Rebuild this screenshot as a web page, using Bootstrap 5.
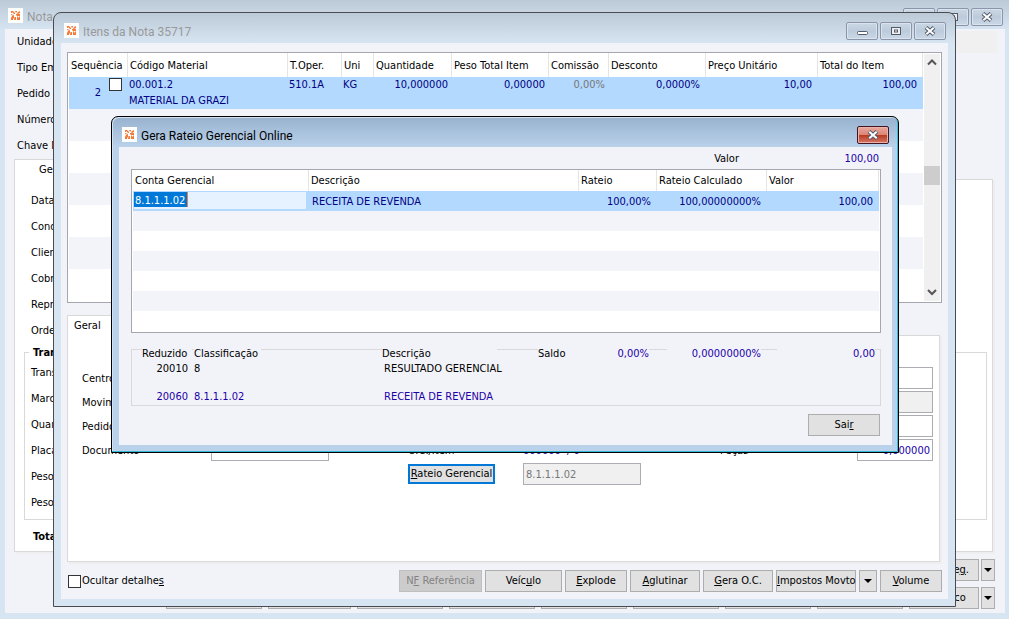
<!DOCTYPE html>
<html lang="pt-BR">
<head>
<meta charset="utf-8">
<meta name="viewport" content="width=device-width, initial-scale=1">
<title>Nota Fiscal</title>
<link href="https://cdn.jsdelivr.net/npm/bootstrap@5.3.0/dist/css/bootstrap.min.css" rel="stylesheet">
<style>
  :root { --client: #f2f3f9; --frame: #d7e4f2; --frame-top: #bccad8; --edge: #4a4a50; --line: #d9d9d9; --field: #abadb3; --navy: #000080; --blue: #1c00a8; }
  body { font: 11px/14px "DejaVu Sans Condensed", "Noto Sans", sans-serif; color: #000; background: #d7e4f2; min-height: 100vh; overflow: hidden; }
  label, input, button, th, td { font-size: 11px; line-height: 14px; }
  .win { position: absolute; isolation: isolate; display: flex; flex-direction: column; background: linear-gradient(var(--frame-top), var(--frame) 30px); overflow: hidden; }
  .win-client { background: var(--client); overflow: hidden; }
  .win-back { inset: 0; padding: 0 4px 6px 5px; }
  .win-items { inset: 12px 53px 12px 53px; padding: 0 7px 7px 7px; border: 1px solid var(--edge); border-radius: 8px 8px 0 0; }
  .win-items > .win-client { padding: 9px 6px 7px; }
  .win-modal { --frame: #b9d1ea; --frame-top: #98b2cf; inset: 116px 110px auto 111px; padding: 0 6px 7px 7px; border: 1px solid #000; border-radius: 7px 7px 0 0; box-shadow: inset -1px -1px #35b9d6, inset 1px 1px #d3e2f1; }
  .win-modal > .win-client { padding: 4px 11px 9px 12px; }
  .titlebar { height: 30px; font: 12px/16px Roboto, "Noto Sans", sans-serif; color: #999; }
  .win-back > .titlebar { height: 29px; padding: 4px 2px 0 3px; }
  .win-items > .titlebar { padding: 6px 2px 0 3px; }
  .win-modal > .titlebar { padding: 6px 3px 0 3px; color: #000; }
  .title-text { padding: 5px 0 0 4px; }
  .app-ico { width: 15px; height: 15px; flex: none; }
  .cap-btn { width: 32px; height: 18px; padding: 0; border: 1px solid #8995a9; border-radius: 2px; background: linear-gradient(#cbd7e4, #bccbdb 50%, #cbd8e6); box-shadow: inset 0 0 0 1px #dbe4ee; display: flex; align-items: center; justify-content: center; }
  .cap-close { border-color: #431422; background: linear-gradient(#e8a99d, #dc8576 48%, #b5391f 50%, #d8786a); box-shadow: inset 0 0 0 1px #eab3a8; }
  .frow { height: 26px; display: flex; align-items: center; }
  .frow label { width: 110px; flex: none; white-space: nowrap; }
  .frow input { width: 200px; height: 22px; }
  .tbox { border: 1px solid var(--field); border-radius: 0; background: #fff; height: 22px; width: 100%; padding: 1px 2px 0; min-width: 0; color: var(--blue); }
  .tbox:disabled { background: #f0f0f0; color: #777; }
  .tab-head { height: 21px; margin-bottom: -1px; background: #fff; border: 1px solid var(--line); border-bottom: 0; z-index: 1; padding: 3px 6px; flex: none; }
  .tab-body { background: #fff; border: 1px solid var(--line); box-shadow: 2px 2px #eeeef1; }
  .group { border: 1px solid var(--line); margin: 8px 5px 0 9px; padding: 7px 0 3px 6px; }
  .group-title { position: absolute; top: -7px; left: 4px; padding: 0 4px; background: #fff; font-weight: bold; }
  .pbtn { height: 22px; padding: 0; border: 1px solid #adadad; border-radius: 0; background: #e1e1e1; color: #000; white-space: nowrap; flex: none; line-height: 20px; }
  .pbtn:disabled { background: #ccc; border-color: #bfbfbf; color: #838383; }
  .pbtn-focus { border: 2px solid #0078d7; height: 20px; line-height: 16px; }
  .w96 { width: 96px; } .w86 { width: 86px; } .w83 { width: 83px; } .w80 { width: 80px; } .w77 { width: 77px; } .w72 { width: 72px; } .w70 { width: 70px; } .w62 { width: 62px; } .w18 { width: 18px; } .w14 { width: 14px; }
  .arrow { display: inline-block; border: 4px solid transparent; border-top-color: #000; border-bottom: 0; vertical-align: middle; }
  .grid-box { border: 1px solid #a5a6ae; background: #fff; overflow: hidden; }
  .items-box { height: 251px; flex: none; }
  .gtable { width: 100%; table-layout: fixed; border-collapse: separate; border-spacing: 0; }
  .gtable th { font-weight: normal; white-space: nowrap; padding: 1px 0 0 2px; border-right: 1px solid #e5e5e5; }
  .gtable td { padding: 0 6px 0 1px; color: var(--navy); white-space: nowrap; vertical-align: top; }
  .items th { height: 24px; }
  .items td { height: 32px; line-height: 16px; }
  .rateio th { height: 21px; }
  .rateio td { height: 20px; line-height: 20px; }
  .rateio .sel td { padding-top: 1px; line-height: 19px; }
  .gtable .sel td { background: #b3d9ff; }
  .gtable .alt td { background: #f3f4f9; }
  .scrollbar { width: 16px; background: #f0f0f0; flex: none; margin: 1px 1px 1px 0; }
  .thumb { height: 19px; background: #cdcdcd; margin-top: 94px; }
  .chk { appearance: none; width: 13px; height: 13px; border: 1px solid #333; background: #fff; margin: 0; flex: none; }
  .detail-grid { display: grid; grid-template-columns: 129px 118px 1fr 115px 118px 1fr 137px 76px; grid-auto-rows: 22px; row-gap: 2px; align-items: center; padding: 31px 6px 0 14px; }
  .detail-grid label, .detail-grid span { padding-top: 1px; }
  .editcell { margin: 0 3px 2px 0; height: 17px; background: #e6f2ff; display: flex; }
  .editcell input { width: 54px; height: 15px; padding: 2px 0 0 1px; border: 0; border-right: 1px solid #f08030; background: #0078d7; color: #fff; outline: 0; }
  .summary { border: 1px solid var(--line); height: 57px; margin-top: 16px; }
  .sgrid { display: grid; grid-template-columns: 10px 50px 2px 67px 1fr 115px 41px 111px 18px 94px 16px 98px 5px; line-height: 14px; white-space: nowrap; }
  .sgrid > * { background: var(--client); }
  .shead { margin-top: -3px; }
  .blue { color: var(--blue); }
</style>
</head>
<body>
<svg width="0" height="0" class="position-absolute" aria-hidden="true">
  <symbol id="app" viewBox="0 0 15 15">
    <rect width="15" height="15" fill="#fff"/>
    <g fill="#f47a38"><path d="M3 3h2l2 2v1H6L4 4v1H3zM7 3h2v1l-1 1zM10 4l2-1v2l-2 1H9zM3 6l3 1v1L3 7zM8 6h4v2H9L8 7zM4 8h2v2l-1 1v1H3v-2zM6.500 9H8v3H6zM9 8l2 2v2H9zM11 8l1 1v3h-1z"/></g>
  </symbol>
  <symbol id="x" viewBox="0 0 12 10"><path d="M2 1.500 10 8.500M10 1.500 2 8.500" stroke="#525a6b" stroke-width="4"/><path d="M2.300 1.800 9.700 8.200M9.700 1.800 2.300 8.200" stroke="#fff" stroke-width="2"/></symbol>
  <symbol id="min" viewBox="0 0 12 10"><rect x="1.500" y="5.500" width="10" height="3" rx="1" fill="#fff" stroke="#525a6b"/></symbol>
  <symbol id="max" viewBox="0 0 12 10"><rect x="1.500" y="1.500" width="9" height="7" fill="#eee" stroke="#525a6b"/><rect x="4.500" y="4" width="3" height="2" fill="#fff" stroke="#525a6b"/></symbol>
</svg>

<main>
<section class="win win-back">
  <header class="titlebar d-flex">
    <svg class="app-ico mt-1"><use href="#app"/></svg><span class="title-text me-auto">Nota</span>
    <div class="d-flex mt-1" style="gap:2px">
      <button class="cap-btn" aria-label="Minimizar"><svg width="12" height="10"><use href="#min"/></svg></button>
      <button class="cap-btn" aria-label="Maximizar"><svg width="12" height="10"><use href="#max"/></svg></button>
      <button class="cap-btn" aria-label="Fechar"><svg width="12" height="10"><use href="#x"/></svg></button>
    </div>
  </header>
  <div class="win-client flex-grow-1 d-flex flex-column">
    <div class="ps-2 ms-1 pe-2">
      <div class="frow"><label for="b1">Unidade</label><input id="b1" class="tbox border-0 flex-grow-1" disabled></div>
      <div class="frow"><label for="b2">Tipo Em.</label><input id="b2" class="tbox"></div>
      <div class="frow"><label for="b3">Pedido</label><input id="b3" class="tbox"></div>
      <div class="frow"><label for="b4">Número</label><input id="b4" class="tbox"></div>
      <div class="frow"><label for="b5">Chave N</label><input id="b5" class="tbox"></div>
    </div>
    <div class="flex-grow-1 d-flex flex-column" style="margin:0 12px 0 9px">
      <div class="tab-head ps-4 w86">Geral</div>
      <div class="tab-body flex-grow-1 pt-2">
        <div class="ps-3">
          <div class="frow"><label for="c1">Data</label><input id="c1" class="tbox"></div>
          <div class="frow"><label for="c2">Cond.</label><input id="c2" class="tbox"></div>
          <div class="frow"><label for="c3">Cliente</label><input id="c3" class="tbox"></div>
          <div class="frow"><label for="c4">Cobr.</label><input id="c4" class="tbox"></div>
          <div class="frow"><label for="c5">Repr.</label><input id="c5" class="tbox"></div>
          <div class="frow"><label for="c6">Ordem</label><input id="c6" class="tbox"></div>
        </div>
        <div class="group position-relative">
          <span class="group-title">Transp.</span>
          <div class="frow"><label for="d1">Transp.</label><input id="d1" class="tbox"></div>
          <div class="frow"><label for="d2">Marca</label><input id="d2" class="tbox"></div>
          <div class="frow"><label for="d3">Quant.</label><input id="d3" class="tbox"></div>
          <div class="frow"><label for="d4">Placa</label><input id="d4" class="tbox"></div>
          <div class="frow"><label for="d5">Peso</label><input id="d5" class="tbox"></div>
          <div class="frow"><label for="d6">Peso</label><input id="d6" class="tbox"></div>
        </div>
        <div class="fw-bold" style="padding:10px 0 0 18px">Total</div>
      </div>
    </div>
    <div class="d-flex flex-column align-items-end" style="gap:6px;padding:7px 10px 4px">
      <div class="d-flex" style="gap:2px"><button class="pbtn w70">Impr. Se<u>g</u>.</button><button class="pbtn w14" aria-label="Mais"><i class="arrow"></i></button></div>
      <div class="d-flex" style="gap:6px">
        <button class="pbtn w96" aria-label="Imprimir"></button><button class="pbtn w83" aria-label="Itens"></button><button class="pbtn w86" aria-label="Parcelas"></button><button class="pbtn w86" aria-label="Serviços"></button><button class="pbtn w86" aria-label="Cancelar"></button><button class="pbtn w86" aria-label="Enviar"></button><button class="pbtn w86" aria-label="Anexos"></button><button class="pbtn w86" aria-label="Consultar"></button>
        <div class="d-flex" style="gap:2px"><button class="pbtn w70">Histórico</button><button class="pbtn w14" aria-label="Mais"><i class="arrow"></i></button></div>
      </div>
    </div>
  </div>
</section>

<section class="win win-items">
  <header class="titlebar d-flex">
    <svg class="app-ico mt-1"><use href="#app"/></svg><span class="title-text me-auto">Itens da Nota 35717</span>
    <div class="d-flex" style="gap:2px;margin-top:3px">
      <button class="cap-btn" aria-label="Minimizar"><svg width="12" height="10"><use href="#min"/></svg></button>
      <button class="cap-btn" aria-label="Maximizar"><svg width="12" height="10"><use href="#max"/></svg></button>
      <button class="cap-btn" aria-label="Fechar"><svg width="12" height="10"><use href="#x"/></svg></button>
    </div>
  </header>
  <div class="win-client flex-grow-1 d-flex flex-column">
    <div class="grid-box items-box d-flex">
      <div class="flex-grow-1" style="padding:0 1px">
      <table class="gtable items">
        <colgroup><col style="width:59px"><col><col style="width:54px"><col style="width:32px"><col style="width:78px"><col style="width:97px"><col style="width:60px"><col style="width:97px"><col style="width:112px"><col style="width:105px"></colgroup>
        <thead><tr><th>Sequência</th><th>Código Material</th><th>T.Oper.</th><th>Uni</th><th>Quantidade</th><th>Peso Total Item</th><th>Comissão</th><th>Desconto</th><th>Preço Unitário</th><th>Total do Item</th></tr></thead>
        <tbody>
          <tr class="sel"><td><div class="d-flex justify-content-end gap-2"><span class="pt-2">2</span><input type="checkbox" class="chk" aria-label="Selecionar item 2" style="margin-top:1px"></div></td><td>00.001.2<br>MATERIAL DA GRAZI</td><td>510.1A</td><td>KG</td><td class="text-end pe-1">10,000000</td><td class="text-end pe-1">0,00000</td><td class="text-end pe-1" style="color:#777">0,00%</td><td class="text-end">0,0000%</td><td class="text-end ps-0">10,00</td><td class="text-end">100,00</td></tr>
          <tr class="alt"><td colspan="10"></td></tr><tr><td colspan="10"></td></tr>
          <tr class="alt"><td colspan="10"></td></tr><tr><td colspan="10"></td></tr>
          <tr class="alt"><td colspan="10"></td></tr><tr><td colspan="10"></td></tr>
        </tbody>
      </table>
      </div>
      <div class="scrollbar d-flex flex-column">
        <svg width="16" height="18"><path d="M4 10.500 8 6.500 12 10.500" fill="none" stroke="#555" stroke-width="2"/></svg>
        <div class="thumb"></div>
        <svg class="mt-auto" width="16" height="18"><path d="M4 7 8 11 12 7" fill="none" stroke="#555" stroke-width="2"/></svg>
      </div>
    </div>
    <div class="tab-head w70" style="margin-top:12px">Geral</div>
    <div class="tab-body flex-grow-1" style="margin-right:2px">
      <div class="detail-grid">
        <label for="e1">Centro</label><input id="e1" class="tbox"><i></i><i></i><i></i><i></i><label for="e2">Valor</label><input id="e2" class="tbox">
        <label for="e3">Movim.</label><input id="e3" class="tbox"><i></i><i></i><i></i><i></i><label for="e4">Total</label><input id="e4" class="tbox" disabled>
        <label for="e5">Pedido</label><input id="e5" class="tbox"><i></i><i></i><i></i><i></i><label for="e6">Peso</label><input id="e6" class="tbox">
        <label for="e7">Documento</label><input id="e7" class="tbox"><i></i><span>O.C./Item</span><span class="blue">000000 &nbsp;/ 0</span><i></i><label for="e8">Peças</label><input id="e8" class="tbox text-end" value="0,000000">
        <i></i><i></i><i></i><button class="pbtn pbtn-focus" style="width:87px"><u>R</u>ateio Gerencial</button><input class="tbox" value="8.1.1.1.02" aria-label="Conta do rateio" disabled>
      </div>
    </div>
    <div class="d-flex align-items-center" style="padding:8px 0 0 1px;gap:3px">
      <div class="d-flex align-items-center me-auto" style="gap:1px"><input type="checkbox" class="chk" id="hide"><label for="hide">Ocultar detalhe<u>s</u></label></div>
      <button class="pbtn w83" disabled>N<u>F</u> Referência</button>
      <button class="pbtn w77">Veíc<u>u</u>lo</button>
      <button class="pbtn w62"><u>E</u>xplode</button>
      <button class="pbtn w70"><u>A</u>glutinar</button>
      <button class="pbtn w70"><u>G</u>era O.C.</button>
      <button class="pbtn w80"><u>I</u>mpostos Movto</button>
      <button class="pbtn w18" aria-label="Mais impostos"><i class="arrow"></i></button>
      <button class="pbtn w62"><u>V</u>olume</button>
    </div>
  </div>
</section>

<section class="win win-modal" role="dialog" aria-label="Gera Rateio Gerencial Online">
  <header class="titlebar d-flex">
    <svg class="app-ico mt-1"><use href="#app"/></svg><span class="title-text me-auto">Gera Rateio Gerencial Online</span>
    <button class="cap-btn cap-close" aria-label="Fechar" style="margin-top:3px"><svg width="12" height="10"><use href="#x"/></svg></button>
  </header>
  <div class="win-client">
    <div class="d-flex justify-content-end" style="padding:1px 2px 0 0"><span>Valor</span><span class="blue text-end" style="width:140px">100,00</span></div>
    <div class="grid-box" style="height:164px;margin-top:3px;padding:0 1px">
      <table class="gtable rateio">
        <colgroup><col style="width:176px"><col><col style="width:78px"><col style="width:110px"><col style="width:112px"></colgroup>
        <thead><tr><th>Conta Gerencial</th><th>Descrição</th><th>Rateio</th><th>Rateio Calculado</th><th>Valor</th></tr></thead>
        <tbody>
          <tr class="sel"><td class="pe-0"><div class="editcell"><input value="8.1.1.1.02" aria-label="Conta Gerencial"></div></td><td style="padding-left:3px">RECEITA DE REVENDA</td><td class="text-end">100,00%</td><td class="text-end">100,00000000%</td><td class="text-end">100,00</td></tr>
          <tr class="alt"><td colspan="5"></td></tr><tr><td colspan="5"></td></tr>
          <tr class="alt"><td colspan="5"></td></tr><tr><td colspan="5"></td></tr>
          <tr class="alt"><td colspan="5"></td></tr><tr><td colspan="5"></td></tr>
        </tbody>
      </table>
    </div>
    <div class="summary">
      <div class="sgrid shead">
        <i class="bg-transparent"></i><span>Reduzido</span><i class="bg-transparent"></i><span>Classificação</span><i class="bg-transparent"></i><span>Descrição</span><i class="bg-transparent"></i><span class="d-flex justify-content-between"><span>Saldo</span><span class="blue">0,00%</span></span><i class="bg-transparent"></i><span class="blue text-end">0,00000000%</span><i class="bg-transparent"></i><span class="blue text-end">0,00</span>
      </div>
      <div class="sgrid" style="margin-top:1px"><i></i><span class="text-end" style="padding-right:4px">20010</span><i></i><span>8</span><i></i><span style="padding-left:2px">RESULTADO GERENCIAL</span></div>
      <div class="sgrid blue" style="margin-top:14px"><i></i><span class="text-end" style="padding-right:4px">20060</span><i></i><span>8.1.1.1.02</span><i></i><span style="padding-left:2px">RECEITA DE REVENDA</span></div>
    </div>
    <div class="d-flex justify-content-end" style="margin-top:8px;padding-right:1px"><button class="pbtn w72">Sai<u>r</u></button></div>
  </div>
</section>
</main>
<script src="https://cdn.jsdelivr.net/npm/bootstrap@5.3.0/dist/js/bootstrap.bundle.min.js"></script>
</body>
</html>
